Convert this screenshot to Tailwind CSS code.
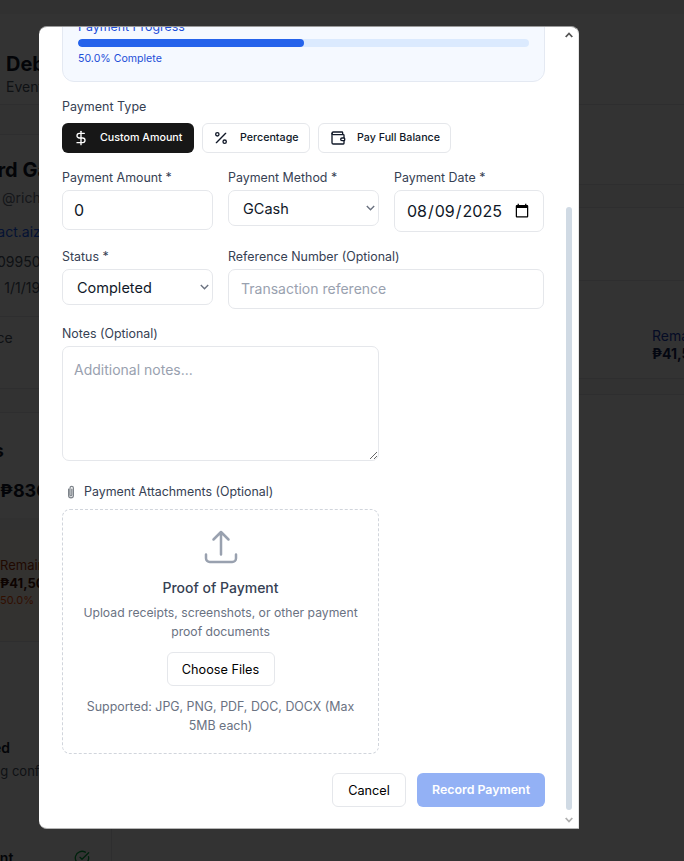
<!doctype html>
<html>
<head>
    <meta charset="UTF-8">
    <meta name="viewport" content="width=device-width, initial-scale=1.0">
    <script src="https://cdn.jsdelivr.net/npm/@tailwindcss/browser@4"></script>
    <title>Record Payment</title>
</head>
<body class="relative w-[684px] h-[861px] overflow-hidden bg-white font-['Inter',sans-serif] text-gray-900">

    <!-- page behind the modal -->
    <div class="h-[861px] overflow-hidden whitespace-nowrap">
        <div class="h-[14px] bg-gray-100 border-b border-gray-100"></div>

        <!-- header -->
        <div class="h-[91px] border-b border-gray-200 pl-[6px] pt-[37px]">
            <p class="text-xl leading-[26px] font-bold">Debt Details</p>
            <p class="text-sm leading-[20px] text-gray-600">Event Payment</p>
        </div>

        <div class="flex">
            <!-- left column -->
            <div class="w-[112px] shrink-0 h-[756px] border-r border-gray-200 overflow-hidden">
                <div class="h-[30px] bg-gray-50 border-b border-gray-200"></div>
                <div class="h-[182px] border-b border-gray-200 pt-[22px]">
                    <p class="text-xl leading-[26px] font-bold ml-[-57px]">Richard Ga</p>
                    <p class="text-sm leading-[20px] text-gray-500 mt-[5px] ml-[2px]">@richard</p>
                    <p class="text-sm leading-[20px] text-blue-600 mt-[14px] ml-[-32px]">contact.aizen</p>
                    <p class="text-sm leading-[20px] text-gray-600 mt-[10px] ml-[-3px]">09950500</p>
                    <p class="text-sm leading-[20px] text-gray-600 mt-[6px] ml-[-31px]">Born 1/1/1995</p>
                </div>
                <div class="h-[72px] border-b border-gray-200 pt-[11px] ml-[-40px]">
                    <p class="text-sm leading-[20px] text-gray-600">Balance</p>
                </div>
                <div class="h-[24px] bg-gray-50 border-b border-gray-200"></div>
                <div class="h-[105px] pt-[26px]">
                    <p class="text-lg leading-[24px] font-bold ml-[-50px]">Totals</p>
                    <p class="text-lg leading-[28px] font-bold mt-[14px]">₱83000</p>
                </div>
                <div class="h-[12px] bg-gray-100"></div>
                <div class="h-[112px] bg-orange-50 border-b border-gray-200 pt-[26px]">
                    <p class="text-[13px] leading-[18px] text-orange-800">Remaining</p>
                    <p class="text-[13px] leading-[18px] font-bold text-orange-950">₱41,500</p>
                    <p class="text-[11px] leading-[16px] text-orange-600">50.0%</p>
                </div>
                <div class="pt-[96px]">
                    <p class="text-sm leading-[20px] font-semibold ml-[-62px]">Confirmed</p>
                    <p class="text-[13px] leading-[20px] text-gray-600 mt-[3px] ml-[-42px]">Pending conf</p>
                    <div class="flex items-center justify-between mt-[67px] ml-[-46px] w-[136px]">
                        <span class="text-sm leading-[20px] font-semibold">Payment</span>
                        <svg class="w-4 h-4 text-green-600" viewBox="0 0 24 24" fill="none" stroke="currentColor" stroke-width="2" stroke-linecap="round" stroke-linejoin="round"><path d="M21.8 10A10 10 0 1 1 17 3.3"/><path d="m9 11 3 3L22 4"/></svg>
                    </div>
                </div>
            </div>

            <!-- right column -->
            <div class="flex-1 overflow-hidden">
                <div class="h-[80px] border-b border-gray-200"></div>
                <div class="h-[23px] bg-gray-50 border-b border-gray-200"></div>
                <div class="h-[73px] border-b border-gray-200"></div>
                <div class="h-[98px] border-b border-gray-200 pl-[540px] pt-[46px]">
                    <p class="text-sm leading-[18px] text-blue-800">Remaining</p>
                    <p class="text-sm leading-[18px] font-bold text-blue-950">₱41,500</p>
                </div>
                <div class="h-[16px] bg-gray-50 border-b border-gray-200"></div>
            </div>
        </div>
    </div>

    <!-- overlay -->
    <div class="absolute inset-0 bg-black/80 pl-[39px] pt-[26px]">

        <!-- modal -->
        <div class="relative w-[540px] h-[803px] bg-white overflow-hidden rounded-t-lg rounded-bl-lg border-t border-b border-r border-t-[#9a9a9a] border-b-[#b5b5b5] border-r-[#e5e5e5]">
            <div class="pl-[23px] w-[506px]">

                <!-- progress card, scrolled partly out of view -->
                <div class="h-[72px] -mt-[17px] pt-[6px] px-[15px] bg-[#f5f9ff] border border-[#e4e9f2] rounded-xl w-[483px]">
                    <p class="text-[12.4px] leading-[20px] text-[#1d4ed8]">Payment Progress</p>
                    <div class="h-2 mt-[2px] bg-[#dbeafe] rounded-full overflow-hidden">
                        <div class="h-2 bg-[#2563eb] rounded-full" style="width: 50%"></div>
                    </div>
                    <p class="text-[10.6px] leading-[16px] mt-[4px] text-[#1d4ed8]">50.0% Complete</p>
                </div>

                <!-- payment type -->
                <p class="text-[12.5px] leading-[22px] text-gray-700 mt-[14px]">Payment Type</p>
                <div class="flex gap-[7.5px] mt-[5px]">
                    <button class="h-[30px] w-[132px] flex items-center gap-[11px] pl-[11px] bg-[#171717] text-white rounded-md text-[10.7px] font-medium">
                        <svg class="w-4 h-4 shrink-0" viewBox="0 0 24 24" fill="none" stroke="currentColor" stroke-width="2" stroke-linecap="round" stroke-linejoin="round"><line x1="12" y1="2" x2="12" y2="22"/><path d="M17 5H9.5a3.5 3.5 0 0 0 0 7h5a3.5 3.5 0 0 1 0 7H6"/></svg>
                        Custom Amount
                    </button>
                    <button class="h-[30px] w-[108.5px] flex items-center gap-[11px] pl-[10.5px] bg-white border border-gray-200 rounded-md text-[10.7px] font-medium">
                        <svg class="w-4 h-4 shrink-0" viewBox="0 0 24 24" fill="none" stroke="currentColor" stroke-width="2" stroke-linecap="round" stroke-linejoin="round"><line x1="19" y1="5" x2="5" y2="19"/><circle cx="6.5" cy="6.5" r="2.5"/><circle cx="17.5" cy="17.5" r="2.5"/></svg>
                        Percentage
                    </button>
                    <button class="h-[30px] w-[133.5px] flex items-center gap-[11.5px] pl-[11px] bg-white border border-gray-200 rounded-md text-[10.7px] font-medium">
                        <svg class="w-4 h-4 shrink-0" viewBox="0 0 24 24" fill="none" stroke="currentColor" stroke-width="2" stroke-linecap="round" stroke-linejoin="round"><path d="M19 7V4a1 1 0 0 0-1-1H5a2 2 0 0 0 0 4h15a1 1 0 0 1 1 1v4h-3a2 2 0 0 0 0 4h3a1 1 0 0 0 1-1v-2a1 1 0 0 0-1-1"/><path d="M3 5v14a2 2 0 0 0 2 2h15a1 1 0 0 0 1-1v-4"/></svg>
                        Pay Full Balance
                    </button>
                </div>

                <!-- amount, method, date -->
                <div class="grid grid-cols-[151px_151px_150px] gap-x-[15px] w-[482px] items-start mt-[14px]">
                    <div>
                        <label class="block text-[12.4px] leading-[22px] text-gray-700">Payment Amount *</label>
                        <input type="number" value="0" class="block mt-[1px] w-full h-[40px] px-[11px] text-base border border-gray-200 rounded-[7px] bg-white">
                    </div>
                    <div>
                        <label class="block text-[12.4px] leading-[22px] text-gray-700">Payment Method *</label>
                        <div class="relative mt-[1px]">
                            <select class="block appearance-none w-full h-[36px] pl-[14px] pt-[2px] text-[14.5px] border border-gray-200 rounded-[7px] bg-white">
                                <option>GCash</option>
                            </select>
                            <svg class="absolute right-[4px] top-[15px] w-[9px] h-[6px]" viewBox="0 0 9 6" fill="none" stroke="#6b7280" stroke-width="1.4"><path d="M.8 1 4.5 4.7 8.2 1"/></svg>
                        </div>
                    </div>
                    <div>
                        <label class="block text-[12.4px] leading-[22px] text-gray-700">Payment Date *</label>
                        <input type="date" value="2025-08-09" class="block mt-[1px] w-full h-[42px] px-[11px] text-base border border-gray-200 rounded-[7px] bg-white">
                    </div>
                </div>

                <!-- status, reference -->
                <div class="grid grid-cols-[151px_1fr] gap-x-[15px] w-[482px] items-start mt-[14px]">
                    <div>
                        <label class="block text-[12.4px] leading-[22px] text-gray-700">Status *</label>
                        <div class="relative mt-[1px]">
                            <select class="block appearance-none w-full h-[36px] pl-[14px] pt-[2px] text-[14.5px] border border-gray-200 rounded-[7px] bg-white">
                                <option>Completed</option>
                            </select>
                            <svg class="absolute right-[4px] top-[15px] w-[9px] h-[6px]" viewBox="0 0 9 6" fill="none" stroke="#6b7280" stroke-width="1.4"><path d="M.8 1 4.5 4.7 8.2 1"/></svg>
                        </div>
                    </div>
                    <div>
                        <label class="block text-[12.4px] leading-[22px] text-gray-700">Reference Number (Optional)</label>
                        <input type="text" placeholder="Transaction reference" class="block mt-[1px] w-full h-[40px] px-3 pb-[2px] text-sm border border-gray-200 rounded-[7px] bg-white placeholder:text-gray-400">
                    </div>
                </div>

                <!-- notes -->
                <label class="block text-[12.4px] leading-[22px] text-gray-700 mt-[14px]">Notes (Optional)</label>
                <textarea placeholder="Additional notes..." class="block mt-[1px] w-[317px] h-[115px] px-[11px] py-[13px] text-sm border border-gray-200 rounded-[7px] bg-white placeholder:text-gray-400"></textarea>

                <!-- attachments -->
                <div class="flex items-center gap-[6px] mt-[21px] pl-[2px]">
                    <svg class="w-[14px] h-[14px] shrink-0" viewBox="0 0 14 14" fill="none" stroke="#7d838a" stroke-width="1.2" stroke-linecap="round"><path d="M4.6 4v6.5a2.4 2.4 0 0 0 4.8 0V3a1.7 1.7 0 0 0-3.4 0v7a.9.9 0 0 0 1.8 0V4"/></svg>
                    <span class="text-[12.4px] leading-[20px] text-gray-700">Payment Attachments (Optional)</span>
                </div>
                <div class="w-[317px] h-[245px] mt-[7px] pt-[17px] border border-dashed border-gray-300 rounded-lg flex flex-col items-center text-center">
                    <svg class="w-10 h-10 text-gray-400" fill="none" viewBox="0 0 24 24" stroke="currentColor" stroke-width="1.5" stroke-linecap="round" stroke-linejoin="round"><path d="M3 16.5v2.25A2.25 2.25 0 0 0 5.25 21h13.5A2.25 2.25 0 0 0 21 18.75V16.5m-13.5-9L12 3m0 0 4.5 4.5M12 3v13.5"/></svg>
                    <p class="text-sm leading-[20px] font-medium text-gray-700 mt-[11px]">Proof of Payment</p>
                    <p class="text-[12.2px] leading-[19px] text-gray-500 mt-[5px] w-[285px]">Upload receipts, screenshots, or other payment proof documents</p>
                    <button class="h-[34px] w-[108px] mt-[11px] pt-[1px] bg-white border border-gray-200 rounded-md text-[12.7px] text-black">Choose Files</button>
                    <p class="text-[12.4px] leading-[19px] text-gray-500 mt-[11px] w-[285px]">Supported: JPG, PNG, PDF, DOC, DOCX (Max 5MB each)</p>
                </div>

                <!-- actions -->
                <div class="flex justify-end gap-[11px] w-[483px] mt-[19px]">
                    <button class="h-[34px] w-[74px] pt-[1px] bg-white border border-gray-200 rounded-md text-[12.7px] text-black">Cancel</button>
                    <button class="h-[34px] w-[128px] bg-[#93b1f5] rounded-md text-[12.4px] font-semibold text-white">Record Payment</button>
                </div>
            </div>

            <!-- scrollbar -->
            <div class="absolute right-[6px] top-[180px] bottom-[18px] w-[6px] bg-[#d0dae4] rounded-sm"></div>
            <svg class="absolute right-[5px] top-[5px] w-2 h-[6px]" viewBox="0 0 8 6" fill="none" stroke="#555" stroke-width="1.8"><path d="M.7 5 4 1.5 7.3 5"/></svg>
            <svg class="absolute right-[5px] bottom-[5px] w-2 h-[6px]" viewBox="0 0 8 6" fill="none" stroke="#b0b0b0" stroke-width="1.8"><path d="M.7 1 4 4.5 7.3 1"/></svg>
        </div>
    </div>
</body>
</html>
